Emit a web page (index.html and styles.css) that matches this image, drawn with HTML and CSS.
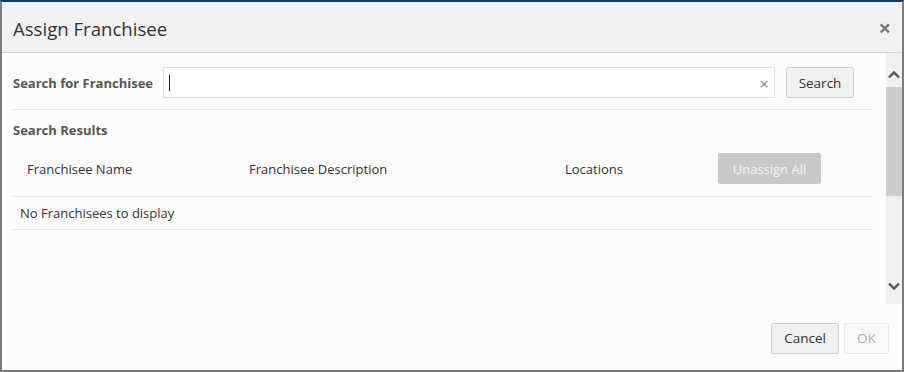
FILE: index.html
```html
<!DOCTYPE html>
<html lang="en">

<head>
    <meta charset="UTF-8">
    <meta name="viewport" content="width=device-width, initial-scale=1.0">
    <title>Assign Franchisee</title>
    <link rel="stylesheet" href="styles.css">
</head>

<body>
    <div class="dialog">
        <div class="dialog-header">
            <h1 class="dialog-title">Assign Franchisee</h1>
            <span class="close">&times;</span>
        </div>

        <div class="dialog-main">
            <div class="content">
                <div class="search-row">
                    <label for="search" class="search-label">Search for Franchisee</label>
                    <div class="search-box">
                        <input type="text" id="search" class="search-input">
                        <span class="caret"></span>
                        <span class="clear">&times;</span>
                    </div>
                    <button class="btn btn-search">Search</button>
                </div>

                <div class="section-title">Search Results</div>

                <div class="grid-head">
                    <div class="col col-name">Franchisee Name</div>
                    <div class="col col-desc">Franchisee Description</div>
                    <div class="col col-loc">Locations</div>
                    <div class="col"><button class="btn btn-unassign">Unassign All</button></div>
                </div>
                <div class="grid-empty">No Franchisees to display</div>
            </div>

            <div class="scrollbar">
                <svg class="arrow arrow-up" width="16" height="16" viewBox="0 0 16 16">
                    <path d="M3 10.5 L8 5.5 L13 10.5" fill="none" stroke="#555" stroke-width="2.4" />
                </svg>
                <div class="thumb"></div>
                <div class="track"></div>
                <svg class="arrow arrow-down" width="16" height="16" viewBox="0 0 16 16">
                    <path d="M3 5.5 L8 10.5 L13 5.5" fill="none" stroke="#555" stroke-width="2.4" />
                </svg>
            </div>
        </div>

        <div class="dialog-footer">
            <button class="btn btn-cancel">Cancel</button>
            <button class="btn btn-disabled">OK</button>
        </div>
    </div>
</body>

</html>
```

FILE: styles.css
```css
* {
    box-sizing: border-box;
}

body {
    margin: 0;
    background: #8a8a8a;
    font-family: "Open Sans", "Noto Sans", sans-serif;
    color: #333;
}

.dialog {
    width: 904px;
    height: 372px;
    display: flex;
    flex-direction: column;
    background: #fcfcfc;
    border: 2px solid #7c7c7c;
    border-top: 2px solid #0f3d60;
}

.dialog-header {
    height: 51px;
    flex-shrink: 0;
    display: flex;
    align-items: center;
    justify-content: space-between;
    padding: 0 11px 0 11px;
    background: #f2f2f2;
    border-bottom: 1px solid #d4d4d4;
}

.dialog-title {
    margin: 0;
    font-size: 18.6px;
    font-weight: 400;
    color: #333;
    padding-top: 3px;
}

.close {
    font-size: 22px;
    font-weight: 700;
    color: #777;
    line-height: 1;
}

.dialog-main {
    height: 251px;
    flex-shrink: 0;
    display: flex;
}

.content {
    flex: 1;
    padding: 14px 14px 0 11px;
}

.search-row {
    display: flex;
    align-items: center;
    padding-right: 18px;
    padding-bottom: 11px;
    border-bottom: 1px solid #e4e4e4;
}

.search-label {
    width: 150px;
    flex-shrink: 0;
    font-size: 13px;
    font-weight: 700;
    color: #555;
}

.search-box {
    flex: 1;
    position: relative;
    margin-right: 11px;
}

.search-input {
    width: 100%;
    height: 31px;
    border: 1px solid #e0e0e0;
    background: #fff;
    outline: none;
    padding: 0 30px 0 8px;
}

.caret {
    position: absolute;
    left: 6px;
    top: 8px;
    width: 1px;
    height: 16px;
    background: #222;
}

.clear {
    position: absolute;
    right: 6px;
    top: 5px;
    font-size: 17px;
    color: #888;
}

.btn {
    height: 31px;
    padding: 0;
    font-family: inherit;
    font-size: 13.5px;
    color: #333;
    background: #f0f0f0;
    border: 1px solid #cfcfcf;
    border-radius: 2px;
}

.btn-search,
.btn-cancel {
    width: 68px;
}

.section-title {
    padding-top: 11px;
    font-size: 13px;
    font-weight: 700;
    color: #555;
}

.grid-head {
    display: flex;
    align-items: center;
    height: 56px;
    margin-top: 2px;
    font-size: 13px;
    border-bottom: 1px solid #e4e4e4;
}

.col-name {
    width: 236px;
    padding-left: 14px;
}

.col-desc {
    width: 316px;
}

.col-loc {
    width: 153px;
}

.btn-unassign {
    width: 103px;
    font-size: 13px;
    background: #c8c8c8;
    border-color: #c8c8c8;
    color: #f4f4f4;
}

.grid-empty {
    height: 33px;
    display: flex;
    align-items: center;
    padding-left: 7px;
    font-size: 13px;
    border-bottom: 1px solid #e4e4e4;
}

.scrollbar {
    width: 16px;
    display: flex;
    flex-direction: column;
    background: #f0f0f0;
}

.arrow {
    flex-shrink: 0;
}

.arrow-up {
    margin: 14px 0 4px;
}

.arrow-down {
    margin: 0 0 10px;
}

.thumb {
    height: 109px;
    background: #cdcdcd;
}

.track {
    flex: 1;
}

.dialog-footer {
    flex: 1;
    display: flex;
    justify-content: flex-end;
    align-items: center;
    gap: 5px;
    padding: 2px 13px 0 0;
}

.btn-disabled {
    width: 45px;
    color: #b0b0b0;
    background: #f8f8f8;
    border-color: #e6e6e6;
}
```
